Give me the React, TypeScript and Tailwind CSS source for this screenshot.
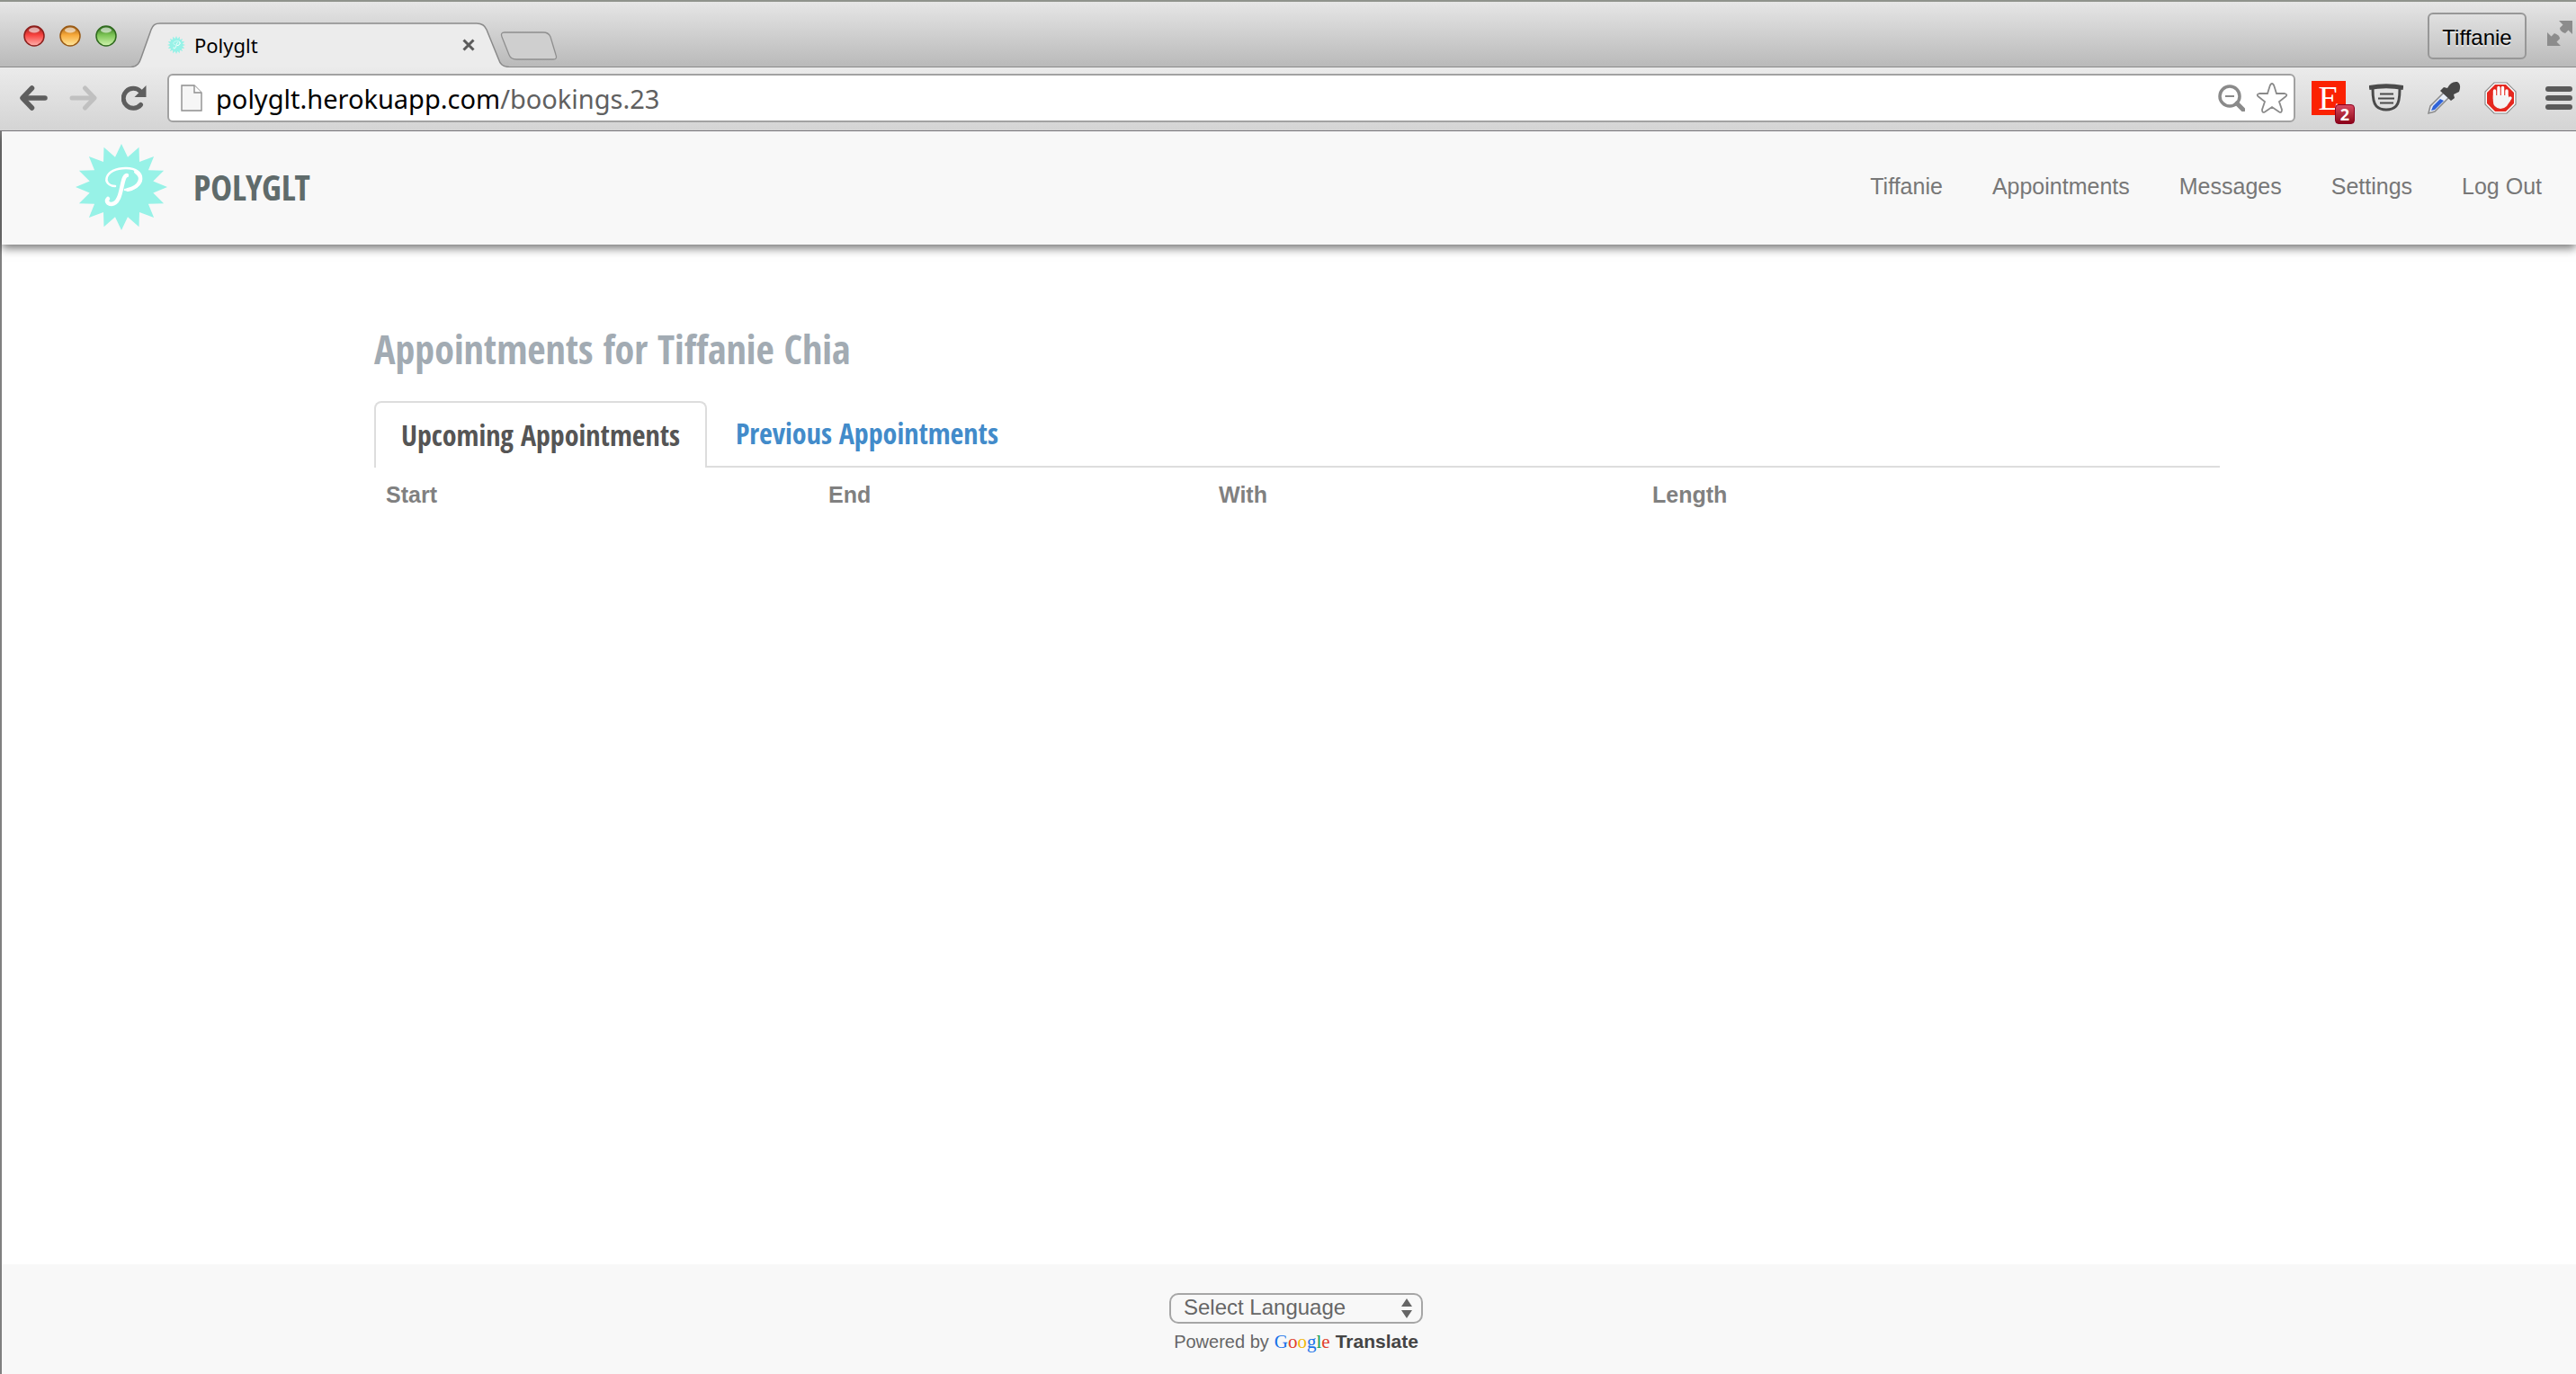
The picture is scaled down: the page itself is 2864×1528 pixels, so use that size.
import React from "react";

const rays = 16;

function burst(cx: number, cy: number, outer: number, inner: number) {
  return Array.from({ length: rays * 2 }, (_, i) => {
    const r = i % 2 === 0 ? outer : inner;
    const a = (Math.PI * i) / rays - Math.PI / 2;
    return (cx + r * Math.cos(a)).toFixed(1) + "," + (cy + r * Math.sin(a)).toFixed(1);
  }).join(" ");
}

function Logo({ className }: { className: string }) {
  return (
    <svg viewBox="0 0 102 96" className={className} aria-hidden="true" preserveAspectRatio="none">
      <g transform="translate(51 48) scale(1 0.94)">
        <polygon points={burst(0, 0, 51, 36)} fill="#97f2e7" />
      </g>
      <path d="M44 47 C28 46 32 27 56 27 C80 27 78 51 55 51" fill="none" stroke="#fff" strokeWidth="2.500" strokeLinecap="round" />
      <path d="M67 31 C76 37 72 48 58 51" fill="none" stroke="#fff" strokeWidth="4" strokeLinecap="round" />
      <path d="M57 35 C50 36 53 66 40 67 C35 67 34 63 36 61" fill="none" stroke="#fff" strokeWidth="4.500" strokeLinecap="round" />
    </svg>
  );
}

function TrafficLight({ id, dark, mid, light, label }: { id: string; dark: string; mid: string; light: string; label: string }) {
  return (
    <button aria-label={label} className="h-6 w-6">
      <svg viewBox="0 0 24 24" className="h-6 w-6">
        <defs>
          <linearGradient id={id} x1="0" y1="0" x2="0" y2="1">
            <stop offset="0" stopColor={dark} />
            <stop offset="0.45" stopColor={mid} />
            <stop offset="1" stopColor={light} />
          </linearGradient>
        </defs>
        <circle cx="12" cy="12" r="11" fill={"url(#" + id + ")"} stroke={dark} strokeWidth="1.5" />
        <ellipse cx="12" cy="5.5" rx="6" ry="3" fill="#fff" opacity="0.6" />
      </svg>
    </button>
  );
}

function TabStrip() {
  return (
    <div className="flex h-[75px] items-end border-t-2 border-[#8f938c] bg-linear-to-b from-[#e6e6e6] to-[#b9b9b9] pl-[26px] shadow-[inset_0_-1px_0_#8a8a8a]">
      <div className="flex gap-4 pb-[23px]">
        <TrafficLight id="red" label="Close window" dark="#8c1f1c" mid="#f8423f" light="#ffb3ae" />
        <TrafficLight id="amber" label="Minimise window" dark="#9a5a14" mid="#f7a93a" light="#ffe9a0" />
        <TrafficLight id="green" label="Zoom window" dark="#2f6a1e" mid="#7cc455" light="#d2f5b0" />
      </div>
      <div className="relative ml-4 h-[50px] w-[420px]">
        <svg viewBox="0 0 420 50" className="absolute inset-0 h-full w-full" aria-hidden="true">
          <path d="M0 49.5 C7 49 9 45 11 39 L22 8 C24 3 26 1 32 1 H384 C390 1 393 3 395 8 L408 40 C410 46 412 49 420 49.5 V51 H0 Z" fill="#ececec" />
          <path d="M0 49.5 C7 49 9 45 11 39 L22 8 C24 3 26 1 32 1 H384 C390 1 393 3 395 8 L408 40 C410 46 412 49 420 49.5" fill="none" stroke="#8a8a8a" strokeWidth="1.5" />
        </svg>
        <div className="relative flex h-full items-center pl-10 pr-[38px]">
          <Logo className="h-5 w-5" />
          <span className="ml-2.5 flex-1 font-['Noto_Sans',sans-serif] text-[22px] leading-none text-black">Polyglt</span>
          <button aria-label="Close tab" className="h-3.5 w-3.5">
            <svg viewBox="0 0 14 14" className="h-3.5 w-3.5"><path d="M1.5 1.5 12.5 12.5M12.5 1.5 1.5 12.5" stroke="#5b5b5b" strokeWidth="3" /></svg>
          </button>
        </div>
      </div>
      <button aria-label="New tab" className="-ml-2.5 mb-2 h-8 w-16">
        <svg viewBox="0 0 64 32" className="h-8 w-16"><path d="M5 1 H48 Q54 1 56 6 L62 26 Q64 31 59 31 H18 Q12 31 10 26 L2 6 Q0 1 5 1 Z" fill="#cfcfcf" stroke="#8f8f8f" strokeWidth="1.3" /></svg>
      </button>
      <div className="flex-1" />
      <button className="mb-[9px] h-[52px] w-[110px] rounded-md border-2 border-[#979797] bg-linear-to-b from-[#e0e0e0] to-[#c4c4c4] pt-1 font-['Liberation_Sans',sans-serif] text-2xl text-black [text-shadow:0_2px_0_rgba(255,255,255,0.5)]">Tiffanie</button>
      <button aria-label="Full screen" className="mb-6 ml-[23px] mr-1 h-7 w-7">
        <svg viewBox="0 0 28 28" className="h-7 w-7" fill="#8c8c8c"><path d="M13 0 H28 V15 L23.500 10.500 L20 14 Q14 12 14 8 L17.500 4.500 Z" /><path d="M15 28 H0 V13 L4.500 17.500 L8 14 Q14 16 14 20 L10.500 23.500 Z" /></svg>
      </button>
    </div>
  );
}

function Toolbar() {
  return (
    <div className="relative z-10 flex h-[71px] items-center border-b border-[#77757a] bg-linear-to-b from-[#ebebeb] to-[#d4d4d4] pb-0.5 pl-[21px] pr-1">
      <button aria-label="Back" className="h-7 w-8">
        <svg viewBox="0 0 32 28" className="h-7 w-8" fill="none" stroke="#5e5e5e" strokeWidth="5.500" strokeLinecap="round"><path d="M29 14H5" /><path d="M14.500 3 L4 14 L14.500 25" strokeLinejoin="round" /></svg>
      </button>
      <button aria-label="Forward" className="ml-6 h-7 w-8">
        <svg viewBox="0 0 32 28" className="h-7 w-8" fill="none" stroke="#c0c0c0" strokeWidth="5" strokeLinecap="round"><path d="M3 14H27" /><path d="M17.500 3 L28 14 L17.500 25" strokeLinejoin="round" /></svg>
      </button>
      <button aria-label="Reload" className="ml-[26px] h-7 w-7">
        <svg viewBox="0 0 28 28" className="h-7 w-7"><path d="M21.500 21.500 A11 11 0 1 1 21 6.500" fill="none" stroke="#5e5e5e" strokeWidth="5" strokeLinecap="round" /><path d="M27.500 0 V13 H14.500 Z" fill="#5e5e5e" /></svg>
      </button>
      <div className="ml-[23px] flex h-[54px] flex-1 items-center rounded-md border-2 border-[#a2a2a2] bg-white pl-[13px] pr-1.5">
        <svg viewBox="0 0 24 30" className="h-[30px] w-6" aria-hidden="true"><path d="M1 1 H15 L23 9 V29 H1 Z" fill="#f6f6f6" stroke="#8f8f8f" strokeWidth="1.4" /><path d="M15 1 V9 H23" fill="#fff" stroke="#8f8f8f" strokeWidth="1.4" /></svg>
        <a href="#bookings" className="ml-[15px] flex-1 font-['Noto_Sans',sans-serif] text-[29px] leading-none text-black">polyglt.herokuapp.com<span className="text-[#606060]">/bookings.23</span></a>
        <button aria-label="Zoom level" className="h-[30px] w-[30px]">
          <svg viewBox="0 0 30 30" className="h-[30px] w-[30px]" fill="none" stroke="#8a8a8a"><circle cx="13" cy="13" r="11" strokeWidth="3.500" /><path d="M8 13H18" strokeWidth="2" /><path d="M21 21 28 28" strokeWidth="5" strokeLinecap="round" /></svg>
        </button>
        <button aria-label="Bookmark this page" className="ml-3 h-9 w-9">
          <svg viewBox="0 0 36 36" className="h-9 w-9"><path d="M18 2 Q19.500 2 20.500 5 L23 13 H32 Q36 14 33 16.500 L26 22 L29 31 Q29 35 26 33.500 L18 28 L10 33.500 Q7 35 7 31 L10 22 L3 16.500 Q0 14 4 13 H13 L15.500 5 Q16.500 2 18 2 Z" fill="#fff" stroke="#8a8a8a" strokeWidth="1.8" /></svg>
        </button>
      </div>
      <button aria-label="Etsy, 2 notifications" className="relative ml-[18px] h-[38px] w-[38px] bg-[#fb2202] font-['Liberation_Serif',serif] text-[38px] leading-[38px] text-white">
        E
        <span className="absolute -bottom-2.5 -right-2.5 h-[22px] w-[22px] rounded-sm border border-[#8a0020] bg-linear-to-b from-[#d84860] to-[#8d0018] font-['Open_Sans',sans-serif] text-lg leading-5 font-bold">2</span>
      </button>
      <button aria-label="Reader" className="ml-[26px] h-[38px] w-[38px]">
        <svg viewBox="0 0 38 38" className="h-[38px] w-[38px]" fill="none" stroke="#4a4a4a"><path d="M0 7.500 Q19 4 38 7.500" strokeWidth="5" /><path d="M4 9 Q4 24 8 28 Q12 32 19 32 Q26 32 30 28 Q34 24 34 9" strokeWidth="3" /><path d="M12 14.500H27M10 19.500H28M12 24.500H27" strokeWidth="2" /></svg>
      </button>
      <button aria-label="Colour picker" className="ml-[26px] h-[38px] w-[38px]">
        <svg viewBox="0 0 38 38" className="h-[38px] w-[38px]"><path d="M2 36 L4 28 L19 13 L25 18 L9 34 Z" fill="#e8eef8" stroke="#8a8a8a" strokeWidth="1.500" /><path d="M5 33 L7 28 L15 20 L19 22 L9 32 Z" fill="#2f63d8" /><path d="M15 11 L19 7 L23 8 Q27 0 34 1 Q39 4 36 12 L30 15 L31 19 L27 22 Z" fill="#474747" /></svg>
      </button>
      <button aria-label="Ad blocker" className="ml-[26px] h-9 w-9">
        <svg viewBox="0 0 36 36" className="h-9 w-9">
          <path d="M11 1 H25 L35 11 V25 L25 35 H11 L1 25 V11 Z" fill="#fff" stroke="#8a8a8a" strokeWidth="1.200" />
          <path d="M12 3 H24 L33 12 V24 L24 33 H12 L3 24 V12 Z" fill="#e5281f" />
          <path d="M11.500 19 V10M16 17 V6.500M20.500 17 V6.500M25 18 V10M26 22 L29 18" stroke="#fff" strokeWidth="3.400" strokeLinecap="round" />
          <path d="M9.800 15 H26.700 L29 21 L25 27 Q22 30 18 30 Q9.800 29 9.800 21 Z" fill="#f4f4f4" />
        </svg>
      </button>
      <button aria-label="Menu" className="ml-8 flex h-[26px] w-[30px] flex-col justify-between">
        <span className="h-1.5 w-full rounded-full bg-[#5a5a5a]" />
        <span className="h-1.5 w-full rounded-full bg-[#5a5a5a]" />
        <span className="h-1.5 w-full rounded-full bg-[#5a5a5a]" />
      </button>
    </div>
  );
}

const links = ["Tiffanie", "Appointments", "Messages", "Settings", "Log Out"];

export default function App() {
  return (
    <div className="flex min-h-screen flex-col bg-white font-['Liberation_Sans',Arial,sans-serif]">
      <TabStrip />
      <Toolbar />
      <div className="flex flex-1 flex-col border-l-2 border-[#808080]">
        <header className="flex h-[126px] items-center bg-[#f8f8f8] pb-0.5 pl-[82px] pr-[38px] shadow-[0_4px_10px_0_rgba(0,0,0,0.55)]">
          <Logo className="h-24 w-[102px]" />
          <a href="#home" className="ml-[29px] font-['Open_Sans_Condensed','Liberation_Sans_Narrow',sans-serif] text-[40px] leading-none font-bold text-[#5f6b6b]">POLYGLT</a>
          <nav className="ml-auto flex gap-[55px] text-[25px] text-[#777]">
            {links.map((l) => (
              <a key={l} href={"#" + l}>{l}</a>
            ))}
          </nav>
        </header>
        <main className="ml-[414px] mr-[396px] mt-20 flex-1">
          <h1 className="font-['Open_Sans_Condensed','Liberation_Sans_Narrow',sans-serif] text-[44px] leading-[72px] font-bold text-[#a2abb3]">Appointments for Tiffanie Chia</h1>
          <div role="tablist" className="mt-[22px] flex border-b-2 border-[#ddd] font-['Open_Sans_Condensed','Liberation_Sans_Narrow',sans-serif] text-[32px] font-bold">
            <button role="tab" aria-selected="true" className="-mb-0.5 h-[74px] w-[370px] whitespace-nowrap rounded-t-lg border-2 border-b-0 border-[#ddd] bg-white text-[#555]">Upcoming Appointments</button>
            <button role="tab" aria-selected="false" className="ml-8 whitespace-nowrap text-[#428bca]">Previous Appointments</button>
          </div>
          <table className="w-full table-fixed text-left text-[25px] leading-9 text-[#808080]">
            <thead>
              <tr>
                <th className="w-[492px] px-[13px] py-3">Start</th>
                <th className="w-[434px] px-[13px] py-3">End</th>
                <th className="w-[482px] px-[13px] py-3">With</th>
                <th className="px-[13px] py-3">Length</th>
              </tr>
            </thead>
          </table>
        </main>
        <footer className="flex h-[122px] flex-col items-center bg-[#f8f8f8] pt-8 pl-4">
          <div className="relative">
            <select aria-label="Select Language" className="h-[34px] w-[282px] appearance-none rounded-[10px] border-2 border-[#a6a6a6] bg-[#f8f8f8] pb-0.5 pl-3.5 text-2xl leading-7 text-[#666]">
              <option>Select Language</option>
            </select>
            <svg viewBox="0 0 12 22" className="pointer-events-none absolute right-3 top-1.5 h-[22px] w-3" fill="#666" aria-hidden="true"><path d="M6 0 12 9H0ZM6 22 12 13H0Z" /></svg>
          </div>
          <p className="mt-1.5 flex items-baseline gap-1.5 text-xl leading-7 text-[#666]">
            Powered by
            <span className="font-['Liberation_Serif',serif] text-[21px]"><span className="text-[#1a73e8]">G</span><span className="text-[#e0402c]">o</span><span className="text-[#f2b90c]">o</span><span className="text-[#1a73e8]">g</span><span className="text-[#16a058]">l</span><span className="text-[#e0402c]">e</span></span>
            <b className="text-[21px] text-[#444]">Translate</b>
          </p>
        </footer>
      </div>
    </div>
  );
}
